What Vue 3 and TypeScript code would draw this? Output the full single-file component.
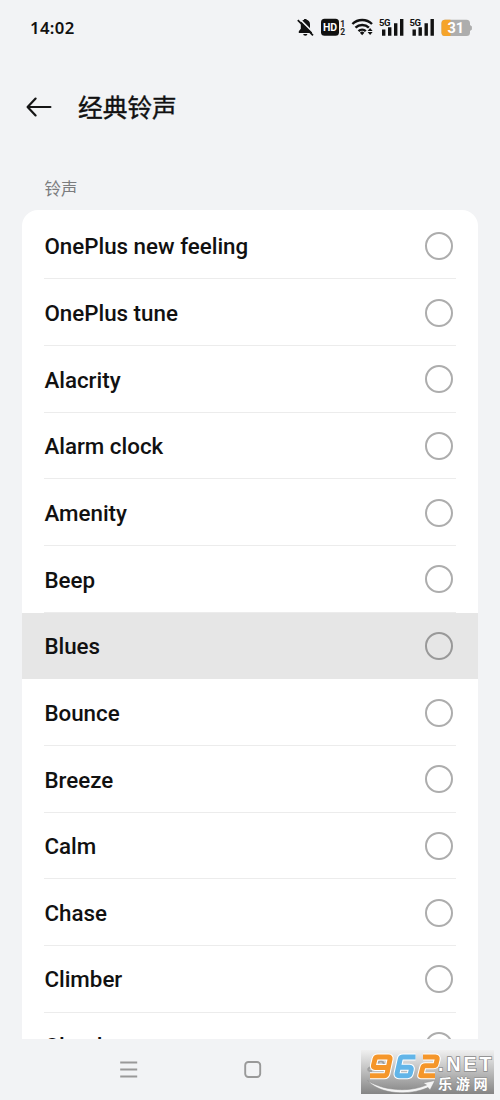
<script setup lang="ts">
interface Ringtone {
  name: string
  pressed?: boolean
}

const ringtones: Ringtone[] = [
  { name: 'OnePlus new feeling' },
  { name: 'OnePlus tune' },
  { name: 'Alacrity' },
  { name: 'Alarm clock' },
  { name: 'Amenity' },
  { name: 'Beep' },
  { name: 'Blues', pressed: true },
  { name: 'Bounce' },
  { name: 'Breeze' },
  { name: 'Calm' },
  { name: 'Chase' },
  { name: 'Climber' },
  { name: 'Cloud' },
]
</script>

<template>
  <div class="screen">
    <header class="status">
      <span class="time">14:02</span>
      <svg class="status-icons" width="180" height="26" viewBox="292 14 180 26">
        <!-- muted bell -->
        <path d="M298.800 33V31.300l2-2.500v-4.500c0-2.600 1.400-4 3.300-4.500v-.9h2.400v.9c2 .5 3.500 2 3.500 4.500v4.500l2 2.500V33z" fill="#111" />
        <path d="M303.200 34h4.200a2.100 1.800 0 0 1-4.200 0z" fill="#111" />
        <path d="M299.300 18.600l15.200 15.200" stroke="#f2f3f5" stroke-width="1.500" />
        <path d="M297.800 20.100l15.200 15.200" stroke="#111" stroke-width="1.700" />
        <!-- HD badge -->
        <rect x="321" y="18.800" width="18" height="17" rx="3.500" fill="#111" />
        <text x="330" y="31.200" class="hd" text-anchor="middle">HD</text>
        <text x="340.300" y="26.700" class="sim">1</text>
        <text x="340.300" y="34.800" class="sim">2</text>
        <!-- wifi -->
        <g fill="none" stroke="#111" stroke-width="2.400">
          <path d="M352.400 24a14 14 0 0 1 19.600 0" />
          <path d="M355.500 27.700a9.600 9.600 0 0 1 13.400 0" />
          <path d="M358.500 31.100a5.300 5.300 0 0 1 7.300 0" />
        </g>
        <path d="M359.900 32.700a3.200 3.200 0 0 1 4.500 0l-2.250 2.600z" fill="#111" />
        <path d="M367.600 30.900l2.500-3 2.500 3zM367.600 32.100l2.500 3 2.500-3z" fill="#111" />
        <!-- cellular -->
        <g fill="#111">
          <text x="379" y="26" class="net">5G</text>
          <path d="M382 29.600h3.400v6.200H382zM388 27.300h3.400v8.500H388zM394 23.300h3.400v12.500H394zM400 19h3.400v16.800H400z" />
          <text x="409.500" y="26" class="net">5G</text>
          <path d="M412.500 29.600h3.400v6.200h-3.400zM418.500 27.300h3.400v8.500h-3.400zM424.500 23.300h3.400v12.500h-3.400zM430.500 19h3.400v16.800h-3.400z" />
        </g>
        <!-- battery -->
        <path d="M445 19.800h21.500a3.500 3.500 0 0 1 3.500 3.500v1.800l1.900 1.300v3.200l-1.900 1.300v1.600a3.500 3.500 0 0 1-3.500 3.500H445a3.500 3.500 0 0 1-3.500-3.500v-9.200a3.500 3.500 0 0 1 3.500-3.500z" fill="#adadad" />
        <path d="M445 19.800h5.500V36H445a3.500 3.500 0 0 1-3.500-3.500v-9.200a3.500 3.500 0 0 1 3.500-3.500z" fill="#f5a42a" />
        <text x="455.700" y="32.900" class="level" text-anchor="middle">31</text>
      </svg>
    </header>

    <div class="titlebar">
      <svg class="back" width="26" height="20" viewBox="0 0 26 20" fill="none" stroke="#151515" stroke-width="2.200">
        <path d="M24.400 10H1.800M9.600 1.600L1.600 10l8 8.400" stroke-linecap="round" stroke-linejoin="round" />
      </svg>
      <h1>经典铃声</h1>
    </div>

    <div class="section">铃声</div>

    <main class="card">
      <div v-for="tone in ringtones" :key="tone.name" class="row" :class="{ pressed: tone.pressed }">
        <span class="name">{{ tone.name }}</span>
        <span class="radio" />
      </div>
    </main>

    <nav class="nav">
      <svg width="300" height="61" viewBox="0 1039 300 61" fill="none" stroke="#999">
        <path d="M120.200 1062.500h17M120.200 1069.500h17M120.200 1076.500h17" stroke-width="1.800" />
        <rect x="245.200" y="1062" width="15" height="15" rx="3.200" stroke-width="1.900" />
      </svg>
      <svg class="watermark" width="133" height="44" viewBox="0 0 133 44">
        <defs>
          <linearGradient id="plate" x1="0" y1="0" x2="0" y2="1">
            <stop offset="0" stop-color="#f0f0f0" />
            <stop offset="0.500" stop-color="#bcbcbc" />
            <stop offset="1" stop-color="#858585" />
          </linearGradient>
        </defs>
        <rect width="133" height="44" fill="url(#plate)" />
        <path d="M11 17c-5 1-5 4 0 4.300M17 13c2-3 5-2 6 1" fill="none" stroke="#a0a0a0" stroke-width="2" />
        <path d="M6.500 30.500c16 10.500 42 12 59 4.500l-3.500-2 12-2.500-5 9.500-2-2.500C48 46 19 44.500 6.500 30.500z" fill="#f4f4f4" stroke="#888" stroke-width=".5" />
        <!-- numerals built from wide strokes with a white rim -->
        <g fill="none" stroke-linejoin="round">
          <g stroke="#fff" stroke-width="7">
            <path d="M27 17.500H14q-2 0-1.600-2L14 9.200q.5-2.200 2.800-2.200H27.500q2 0 1.600 2L26 23.500q-.5 2.200-2.800 2.200H9" />
            <path d="M54.500 7H42q-2.300 0-2.800 2.200L36 23.500q-.5 2.200 2 2.200h8.500q2.300 0 2.800-2.200l1-4q.5-2.200-1.600-2.200H38" />
            <path d="M62 7h12.500q2.200 0 1.700 2.200l-1 4.200q-.5 2.400-2.800 2.400h-8q-2.300 0-2.800 2.200L59.700 25.700H74" />
          </g>
          <g stroke-width="4.900">
            <path d="M27 17.500H14q-2 0-1.600-2L14 9.200q.5-2.200 2.800-2.200H27.500q2 0 1.600 2L26 23.500q-.5 2.200-2.800 2.200H9" stroke="#f5962a" />
            <path d="M54.500 7H42q-2.300 0-2.800 2.200L36 23.500q-.5 2.200 2 2.200h8.500q2.300 0 2.800-2.200l1-4q.5-2.200-1.600-2.200H38" stroke="#62b5e8" />
            <path d="M62 7h12.500q2.200 0 1.700 2.200l-1 4.200q-.5 2.400-2.800 2.400h-8q-2.300 0-2.800 2.200L59.700 25.700H74" stroke="#f5962a" />
          </g>
        </g>
        <text x="77" y="20.500" class="wm-net" textLength="53.500" lengthAdjust="spacing">.NET</text>
        <text y="38.500" class="wm-cn"><tspan x="77">乐</tspan><tspan x="94.700">游</tspan><tspan x="112.400">网</tspan></text>
      </svg>
    </nav>
  </div>
</template>

<style>
body {
  margin: 0;
  background: #f2f3f5;
}
</style>

<style scoped>
.screen {
  width: 500px;
  height: 1100px;
  overflow: hidden;
  display: flex;
  flex-direction: column;
  background: #f2f3f5;
  color: #111;
  font-family: Roboto, "Noto Sans CJK SC", sans-serif;
}
.status {
  height: 54px;
  flex: none;
  box-sizing: border-box;
  padding: 14px 28px 0 30px;
  display: flex;
  justify-content: space-between;
}
.time {
  font: 600 16.700px/28px "Noto Sans", sans-serif;
  letter-spacing: 0.350px;
}
.hd {
  font: 700 10.500px Roboto, sans-serif;
  fill: #fff;
}
.sim {
  font: 700 8.500px Roboto, sans-serif;
  fill: #222;
}
.net {
  font: 700 9.500px Roboto, sans-serif;
  letter-spacing: -0.500px;
}
.level {
  font: 700 14.500px Roboto, sans-serif;
  fill: #fff;
}
.titlebar {
  height: 106px;
  flex: none;
  box-sizing: border-box;
  padding-left: 26px;
  display: flex;
  align-items: center;
  gap: 26px;
}
h1 {
  margin: 0;
  padding-bottom: 2px;
  font: 400 24.700px/36px "Noto Sans CJK SC", sans-serif;
  -webkit-text-stroke: 0.400px #111;
}
.section {
  height: 50px;
  flex: none;
  box-sizing: border-box;
  padding: 16px 0 0 44.500px;
  font: 400 16.500px/24px "Noto Sans CJK SC", sans-serif;
  color: #7b7c7e;
}
.card {
  height: 829px;
  flex: none;
  box-sizing: border-box;
  margin: 0 22px;
  padding-top: 2.700px;
  border-radius: 16px 16px 0 0;
  background: #fff;
  overflow: hidden;
}
.row {
  height: 66.670px;
  box-sizing: border-box;
  padding: 0 25px 0 22.400px;
  display: flex;
  align-items: center;
  justify-content: space-between;
  background: linear-gradient(#ececec, #ececec) 22px 100% / 412px 1px no-repeat;
}
.row.pressed {
  background: #e6e6e6;
}
.name {
  padding-top: 0.500px;
  font-size: 22.350px;
  font-weight: 460;
  line-height: 30px;
}
.radio {
  width: 28px;
  height: 28px;
  box-sizing: border-box;
  border: 2px solid #adadad;
  border-radius: 50%;
}
.pressed .radio {
  border-color: #999;
}
.nav {
  height: 61px;
  flex: none;
  display: flex;
  align-items: flex-start;
  justify-content: space-between;
  padding-right: 6px;
}
.watermark {
  margin-top: 11px;
}
.wm-net {
  font: 700 19.500px "Liberation Sans", sans-serif;
  fill: #fff;
  stroke: #888;
  stroke-width: 1.500px;
  paint-order: stroke;
}
.wm-cn {
  font: 700 14.200px "Noto Sans CJK SC", sans-serif;
  fill: #fff;
  stroke: #888;
  stroke-width: 1px;
  paint-order: stroke;
}
</style>
